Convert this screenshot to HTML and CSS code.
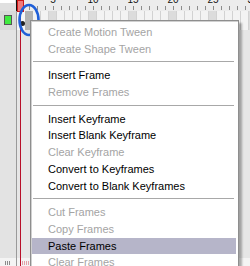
FILE: index.html
```html
<!DOCTYPE html>
<html>
    <head>
    <link rel="stylesheet" href="styles.css">
        <title>Timeline menu</title>
    </head>
    <body>
        <div class="timeline">
  <div class="layers">
    <div class="layers-head"><span class="head-box"></span></div>
    <div class="layer-row"><span class="layer-color"></span></div>
    <div class="layers-fill"></div>
    <div class="layers-foot"><span class="foot-marks"></span></div>
  </div>
  <div class="frames">
    <div class="ruler">
      <div class="ruler-labels">
        <span>5</span><span>10</span><span>15</span><span>20</span><span>25</span><span>30</span>
      </div>
      <div class="ruler-ticks"></div>
    </div>
    <div class="frame-row">
      <span class="keyframe"><i class="key-dot"></i></span>
      <span class="frame-selected"></span>
    </div>
    <div class="frames-fill"></div>
    <div class="frames-foot"><span class="foot-marks pink"></span></div>
  </div>

  <!-- playhead and the circle drawn over the screenshot -->
  <div class="playhead"></div>
  <svg class="callout" width="26" height="38" viewBox="0 0 26 38">
    <ellipse cx="12" cy="19" rx="9.5" ry="15" fill="none" stroke="#1f5fd8" stroke-width="2.6"/>
  </svg>

  <ul class="menu">
    <li class="off">Create Motion Tween</li>
    <li class="off">Create Shape Tween</li>
    <li class="sep"></li>
    <li>Insert Frame</li>
    <li class="off">Remove Frames</li>
    <li class="sep"></li>
    <li>Insert Keyframe</li>
    <li>Insert Blank Keyframe</li>
    <li class="off">Clear Keyframe</li>
    <li>Convert to Keyframes</li>
    <li>Convert to Blank Keyframes</li>
    <li class="sep"></li>
    <li class="off">Cut Frames</li>
    <li class="off">Copy Frames</li>
    <li class="hover">Paste Frames</li>
    <li class="off">Clear Frames</li>
  </ul>
</div>
    </body>
</html>
```

FILE: styles.css
```css
body {
  margin: 0;
  width: 250px;
  height: 266px;
  overflow: hidden;
  font-family: "Liberation Sans", Arial, sans-serif;
}

.timeline {
  position: relative;
  display: flex;
  width: 250px;
  height: 266px;
  overflow: hidden;
  background-color: #e6e6e6;
}

/* left column with the layer */
.layers {
  width: 16px;
  flex-shrink: 0;
  display: flex;
  flex-direction: column;
  border-right: 1px solid #9a9a9a;
  background-color: #e3e3e3;
}

.layers-head {
  height: 11px;
  border-right: 1px solid #111;
  margin-right: -1px;
  background-color: #e0e0e0;
}

.head-box {
  display: block;
  width: 15px;
  height: 3px;
  background-color: #fff;
}

.layer-row {
  height: 19px;
  padding: 4px 0 0 4px;
  box-sizing: border-box;
  background-color: #d9d9d9;
}

.layer-color {
  display: block;
  width: 6px;
  height: 8px;
  border: 1px solid #555;
  background-color: #3fea3f;
}

.layers-fill, .frames-fill {
  flex: 1;
}

.layers-foot, .frames-foot {
  height: 8px;
  padding: 3px 0 0 5px;
  box-sizing: border-box;
  background-color: #f4f4f4;
}

.foot-marks {
  display: block;
  width: 6px;
  height: 4px;
  background: repeating-linear-gradient(to right, #8a8a8a 0 1px, transparent 1px 2px);
}

.foot-marks.pink {
  width: 7px;
  background: repeating-linear-gradient(to right, #e3a0a8 0 1px, transparent 1px 2px);
}

/* frames area */
.frames {
  flex: 1;
  display: flex;
  flex-direction: column;
}

.ruler {
  height: 11px;
  background-color: #ececec;
  overflow: hidden;
}

.ruler-labels {
  display: flex;
  height: 6px;
  padding-left: 16px;
  font-size: 10px;
  line-height: 10px;
  color: #111;
}

.ruler-labels span {
  width: 40px;
  flex-shrink: 0;
  text-align: center;
  margin-top: -5px;
}

.ruler-ticks {
  height: 4px;
  background: repeating-linear-gradient(to right, transparent 0 4px, #8c8c8c 4px 5px, transparent 5px 8px);
}

.frame-row {
  display: flex;
  height: 19px;
  background:
    repeating-linear-gradient(to right, transparent 0 7px, #d2d2d2 7px 8px),
    repeating-linear-gradient(to right, transparent 0 32px, #dcdcdc 32px 40px),
    #f3f3f3;
}

.keyframe {
  width: 8px;
  position: relative;
  background-color: #f6f6f6;
}

.key-dot {
  position: absolute;
  left: 3px;
  top: 10px;
  width: 5px;
  height: 5px;
  border-radius: 50%;
  background-color: #222;
}

.frame-selected {
  width: 8px;
  background-color: #b3b3b3;
}

.playhead {
  position: absolute;
  left: 17px;
  top: 0;
  width: 5px;
  height: 10px;
  border: 1px solid #d01818;
  background-color: #f07a7a;
}

.playhead::after {
  content: "";
  position: absolute;
  left: 2px;
  top: 10px;
  width: 1px;
  height: 256px;
  background-color: #b8102a;
}

.callout {
  position: absolute;
  left: 17px;
  top: 1px;
}

/* context menu */
.menu {
  position: absolute;
  left: 30px;
  top: 20px;
  width: 209px;
  height: 270px;
  box-sizing: border-box;
  margin: 0;
  padding: 3px 2px 0 1px;
  list-style: none;
  background-color: #fff;
  border: 1px solid #8e8e8e;
  box-shadow: inset 1px 1px 0 #d0d0d0, 3px 3px 2px rgba(0, 0, 0, 0.3);
  font-size: 11px;
  color: #000;
}

.menu li {
  height: 16.7px;
  line-height: 16.7px;
  padding-left: 16px;
  white-space: nowrap;
}

.menu li.off {
  color: #a4a4a4;
}

.menu li.hover {
  background-color: #b6b5c9;
}

.menu li.sep {
  height: 1px;
  margin: 4px 2px 5px 1px;
  padding: 0;
  background-color: #a8a8a8;
}
```
